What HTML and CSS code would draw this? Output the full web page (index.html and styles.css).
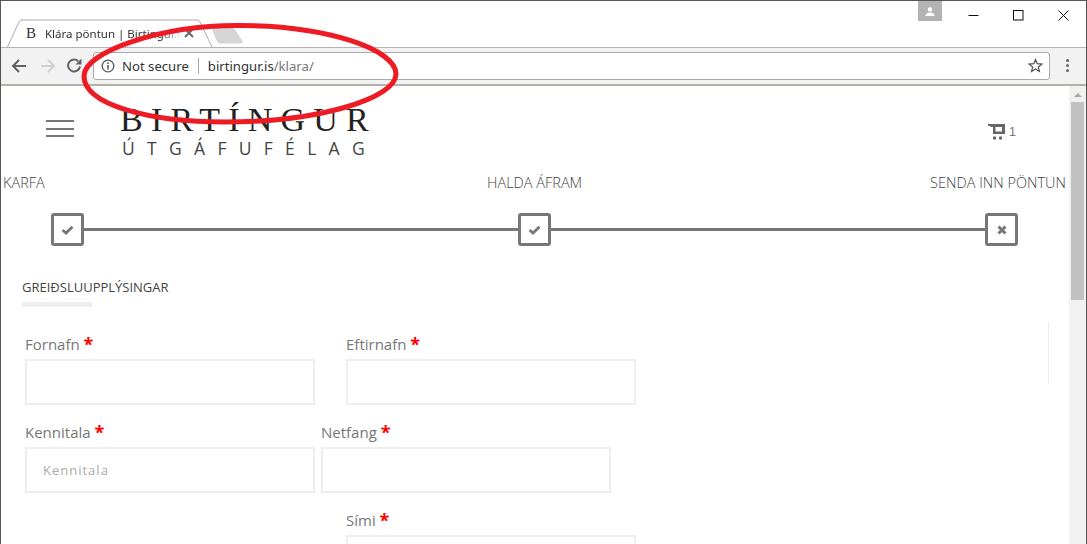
FILE: index.html
```html
<!DOCTYPE html>
<html lang="is">
<head>
<meta charset="utf-8">
<title>Klára pöntun | Birtingur.is</title>
<link rel="stylesheet" href="styles.css">
</head>
<body>
<div class="window">
  <div class="titlebar">
    <div class="tab">
      <svg class="tab-shape" width="210" height="28" viewBox="0 0 210 28"><path d="M0.5 28 L12 3 Q13 1 15 1 L190 1 Q192 1 193 3 L205 28" fill="#fff" stroke="#aaa"/></svg>
      <span class="favicon">B</span>
      <span class="tab-title">Klára pöntun | Birtingur.is</span>
      <svg class="tab-close" width="10" height="10" viewBox="0 0 10 10"><path d="M1 1 L9 9 M9 1 L1 9" stroke="#666" stroke-width="1.8"/></svg>
    </div>
    <svg class="newtab" width="33" height="16" viewBox="0 0 33 16"><path d="M1 1.5 Q1 0 3 0 L21 0 Q23 0 24 1.5 L31.5 13 Q32.5 15.5 30 15.5 L9 15.5 Q7 15.5 6 13.5 Z" fill="#d5d5d5"/></svg>
    <div class="spacer"></div>
    <div class="profile"><svg width="10" height="9" viewBox="0 0 10 9"><circle cx="5" cy="2.5" r="2.3" fill="#fff"/><path d="M0.5 9 Q0.5 5.5 5 5.5 Q9.5 5.5 9.5 9 Z" fill="#fff"/></svg></div>
    <div class="winctl"><svg width="11" height="11" viewBox="0 0 11 11"><path d="M0.5 5.5 H10.5" stroke="#111"/></svg></div>
    <div class="winctl"><svg width="11" height="11" viewBox="0 0 11 11"><rect x="0.5" y="0.5" width="9.5" height="9.5" fill="none" stroke="#111"/></svg></div>
    <div class="winctl"><svg width="11" height="11" viewBox="0 0 11 11"><path d="M0.5 0.5 L10.5 10.5 M10.5 0.5 L0.5 10.5" stroke="#111"/></svg></div>
  </div>
  <div class="toolbar">
    <svg class="navbtn" width="16" height="14" viewBox="0 0 16 14"><path d="M15 7 H2 M8 1 L2 7 L8 13" fill="none" stroke="#5f6368" stroke-width="2"/></svg>
    <svg class="navbtn" width="16" height="14" viewBox="0 0 16 14"><path d="M1 7 H14 M8 1 L14 7 L8 13" fill="none" stroke="#d0d0d0" stroke-width="2"/></svg>
    <svg class="navbtn" width="15" height="15" viewBox="0 0 15 15"><path d="M13 8.5 A6 6 0 1 1 11.3 3.2" fill="none" stroke="#5f6368" stroke-width="2"/><path d="M14.5 0.5 V6.5 H8.5 Z" fill="#5f6368"/></svg>
    <div class="omnibox">
      <svg class="info" width="14" height="14" viewBox="0 0 14 14"><circle cx="7" cy="7" r="5.8" fill="none" stroke="#555" stroke-width="1.3"/><path d="M7 6 V10.5" stroke="#555" stroke-width="1.5"/><circle cx="7" cy="4.2" r="0.9" fill="#555"/></svg>
      <span class="secure">Not secure</span>
      <span class="divider"></span>
      <span class="url">birtingur.is<span class="url-path">/klara/</span></span>
      <div class="spacer"></div>
      <svg class="star" width="15" height="15" viewBox="0 0 15 15"><path d="M7.5 1.5 L9.2 5.7 L13.8 6.1 L10.3 9 L11.4 13.4 L7.5 11 L3.6 13.4 L4.7 9 L1.2 6.1 L5.8 5.7 Z" fill="none" stroke="#555" stroke-width="1.2"/></svg>
    </div>
    <div class="menu"><i></i><i></i><i></i></div>
  </div>
  <div class="viewport">
    <main class="page">
      <header class="site-header">
        <div class="burger"><i></i><i></i><i></i></div>
        <div class="logo">
          <div class="logo-main">BIRTÍNGUR</div>
          <div class="logo-sub">ÚTGÁFUFÉLAG</div>
        </div>
        <div class="spacer"></div>
        <div class="cart">
          <svg width="17" height="16" viewBox="0 0 17 16"><path d="M0 0 H17 V10 H5 V3 H2.5 V2 H0 Z M7.5 3 V7.5 H14 V3 Z" fill="#666" fill-rule="evenodd"/><circle cx="6.5" cy="14" r="1.7" fill="#666"/><circle cx="12.5" cy="14" r="1.7" fill="#666"/></svg>
          <span class="cart-count">1</span>
        </div>
      </header>
      <div class="step-labels">
        <span class="step-label-first">KARFA</span><span class="step-label-mid">HALDA ÁFRAM</span><span>SENDA INN PÖNTUN</span>
      </div>
      <div class="stepper">
        <div class="step"><svg width="13" height="10" viewBox="0 0 13 10"><path d="M1.5 5 L5 8 L11.5 1.8" fill="none" stroke="#777" stroke-width="2.8"/></svg></div>
        <div class="step-line"></div>
        <div class="step"><svg width="13" height="10" viewBox="0 0 13 10"><path d="M1.5 5 L5 8 L11.5 1.8" fill="none" stroke="#777" stroke-width="2.8"/></svg></div>
        <div class="step-line"></div>
        <div class="step"><svg width="10" height="10" viewBox="0 0 10 10"><path d="M1.5 1.5 L8.5 8.5 M8.5 1.5 L1.5 8.5" fill="none" stroke="#777" stroke-width="3"/></svg></div>
      </div>
      <h2 class="section-title">GREIÐSLUUPPLÝSINGAR</h2>
      <div class="section-rule"></div>
      <div class="side-rule"></div>
      <form class="form">
        <div class="row row-wide">
          <label class="field"><span class="lbl">Fornafn <b>*</b></span><input class="inp" type="text"></label>
          <label class="field"><span class="lbl">Eftirnafn <b>*</b></span><input class="inp" type="text"></label>
        </div>
        <div class="row row-tight">
          <label class="field"><span class="lbl">Kennitala <b>*</b></span><input class="inp" type="text" placeholder="Kennitala"></label>
          <label class="field"><span class="lbl">Netfang <b>*</b></span><input class="inp" type="text"></label>
        </div>
        <div class="row row-offset">
          <label class="field"><span class="lbl">Sími <b>*</b></span><input class="inp" type="text"></label>
        </div>
      </form>
    </main>
    <aside class="scrollbar">
      <span class="scroll-up"></span>
      <span class="scroll-thumb"></span>
    </aside>
  </div>
  <svg class="annotation" width="1087" height="544" viewBox="0 0 1087 544"><path d="M84 76 C84 52 160 25 240 25.5 C330 26 396 50 396 74 C396 98 320 122 225 122 C150 122 84 105 84 76 Z" fill="none" stroke="#ed1c24" stroke-width="5"/></svg>
</div>
</body>
</html>
```
FILE: styles.css
```css
* { box-sizing: border-box; }
html, body { margin: 0; padding: 0; background: #fff; }
body { width: 1087px; height: 544px; overflow: hidden; font-family: "Open Sans", sans-serif; }
.window { position: relative; width: 1087px; height: 544px; border: 1px solid #555; border-bottom: 0; display: flex; flex-direction: column; overflow: hidden; background: #fff; }
.spacer { flex: 1; }

.titlebar { height: 46px; flex: none; display: flex; align-items: flex-start; position: relative; }
.tab { position: relative; width: 205px; height: 28px; margin: 18px 0 0 6px; flex: none; display: flex; align-items: center; z-index: 2; margin-bottom: -1px; }
.tab-shape { position: absolute; left: 0; top: 0; }
.favicon { position: relative; margin-left: 19px; width: 19px; font: 15px "Liberation Serif", serif; color: #333; }
.tab-title { position: relative; width: 136px; white-space: nowrap; overflow: hidden; font: 11.5px "Noto Sans", sans-serif; color: #333; -webkit-mask-image: linear-gradient(90deg, #000 85%, transparent); mask-image: linear-gradient(90deg, #000 85%, transparent); }
.tab-close { position: relative; margin-left: 3px; }
.newtab { margin: 27px 0 0 -1px; flex: none; }
.profile { width: 24px; height: 20px; margin-right: 9px; background: #b3b3b3; flex: none; display: flex; align-items: center; justify-content: center; }
.winctl { width: 45px; height: 28px; flex: none; display: flex; align-items: center; justify-content: center; }

.toolbar { height: 39px; flex: none; display: flex; align-items: center; background: #f2f2f2; border-top: 1px solid #b4b4b4; border-bottom: 2px solid #b5b1a8; padding: 0 0 1px 10px; }
.navbtn { flex: none; margin-right: 13px; }
.navbtn:nth-child(3) { margin-right: 0; margin-left: -2px; }
.omnibox { flex: none; margin-left: 11px; width: 957px; height: 28px; background: #fff; border: 1px solid #aaa; border-radius: 3px; display: flex; align-items: center; padding: 0 6px 0 7px; }
.info { flex: none; margin-right: 7px; }
.secure { font: 13.15px "Noto Sans", sans-serif; color: #333; }
.divider { width: 1px; height: 16px; background: #aaa; margin: 0 9px 0 9px; }
.url { font: 13.15px "Noto Sans", sans-serif; color: #333; }
.url-path { color: #777; }
.menu { margin-left: 16px; display: flex; flex-direction: column; gap: 2px; }
.menu i { width: 3px; height: 3px; border-radius: 50%; background: #666; display: block; }

.viewport { flex: 1; min-height: 0; display: flex; }
.page { position: relative; flex: 1; min-width: 0; color: #777; }
.scrollbar { width: 17px; flex: none; background: #f1f1f1; padding: 0 2px; display: flex; flex-direction: column; align-items: center; }
.scroll-up { margin-top: 7px; border: 4px solid transparent; border-top: 0; border-bottom: 4px solid #aaa; }
.scroll-thumb { margin-top: 5px; width: 13px; height: 198px; background: #c1c1c1; }

.site-header { height: 85px; display: flex; align-items: flex-start; padding-left: 45px; }
.burger { margin-top: 34px; width: 28px; display: flex; flex-direction: column; gap: 5.5px; }
.burger i { display: block; height: 2px; background: #777; }
.logo { margin-left: 46px; margin-top: 17px; color: #222; }
.logo-main { font: 34px/34px "Liberation Serif", serif; letter-spacing: 8.2px; white-space: nowrap; }
.logo-sub { font: 400 17.5px/18px "Open Sans", sans-serif; letter-spacing: 12.3px; white-space: nowrap; margin-left: 2px; margin-top: 2px; color: #444; }
.cart { margin-top: 38px; margin-right: 53px; display: flex; align-items: center; gap: 4px; }
.cart-count { font: 12.5px "Liberation Sans", sans-serif; color: #777; }

.step-labels { display: flex; padding: 3px 3px 0 2px; font-size: 14.5px; font-weight: 300; line-height: 18px; color: #444; }
.step-label-first { width: 484px; flex: none; }
.step-label-mid { flex: 1; }
.stepper { display: flex; align-items: center; padding-left: 50px; padding-right: 51px; margin-top: 21px; }
.step { width: 33px; height: 33px; flex: none; border: 3px solid #777; border-radius: 3px; display: flex; align-items: center; justify-content: center; }
.step-line { flex: 1; height: 3px; background: #777; }

.section-title { margin: 32px 0 0 21px; font-size: 13px; line-height: 18px; font-weight: 400; color: #444; }
.section-rule { margin: 6px 0 0 21px; width: 70px; height: 5px; background: #eee; }
.side-rule { position: absolute; left: 1047px; top: 236px; width: 1px; height: 62px; background: #eee; }

.form { margin-top: 27px; display: flex; flex-direction: column; gap: 17px; }
.row { display: flex; padding-left: 24px; }
.row-wide { gap: 31px; }
.row-tight { gap: 6px; }
.row-offset { padding-left: 345px; }
.field { display: flex; flex-direction: column; width: 290px; flex: none; }
.lbl { font-size: 15px; line-height: 20px; color: #777; margin-bottom: 5px; }
.lbl b { color: #f00; font-weight: 700; font-size: 18px; line-height: 0; vertical-align: -1px; }
.inp { display: block; width: 290px; height: 46px; border: 2px solid #eee; background: #fff; padding: 0 16px; outline: 0; font: 13px "Open Sans", sans-serif; letter-spacing: 1px; }
.inp::placeholder { color: #aaa; opacity: 1; }

.annotation { position: absolute; left: -1px; top: -1px; pointer-events: none; z-index: 5; }
```
